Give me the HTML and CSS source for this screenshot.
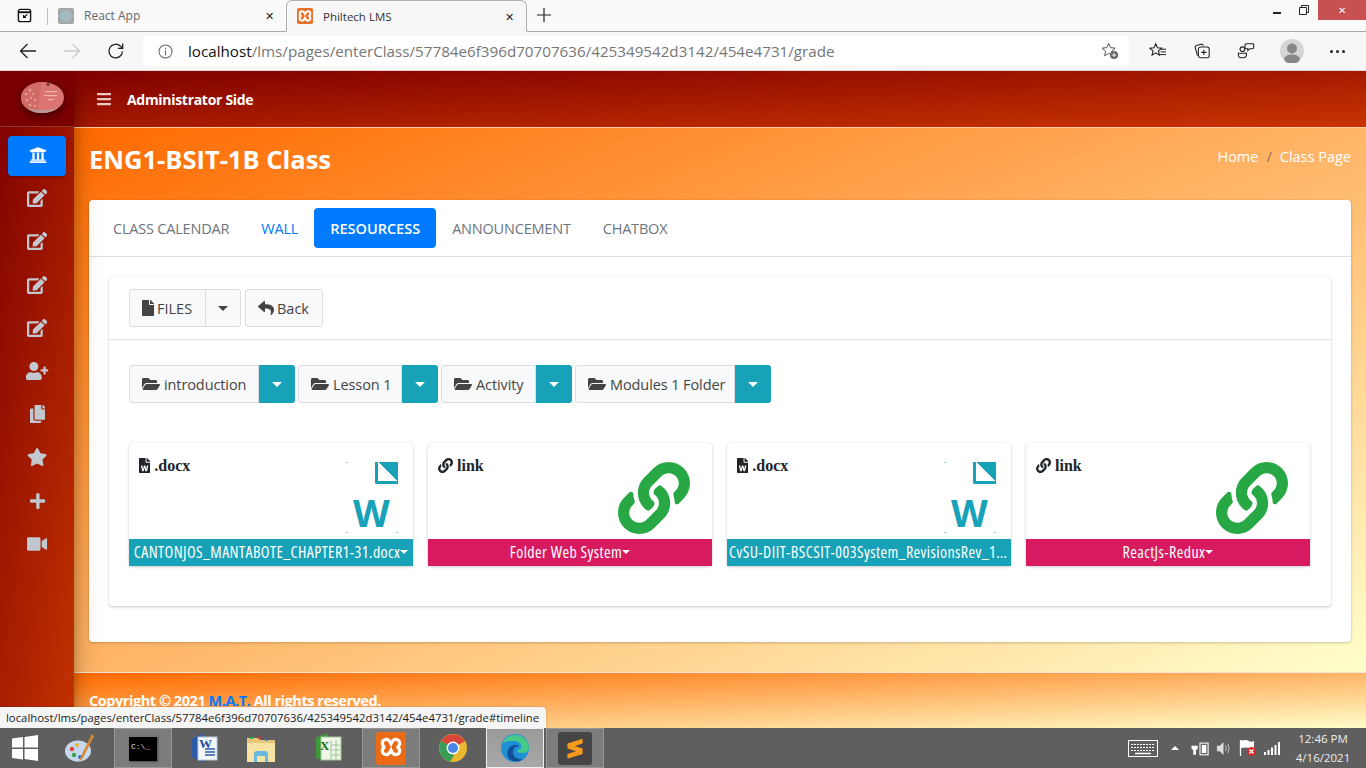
FILE: index.html
```html
<!DOCTYPE html>
<html lang="en">
<head>
  <meta charset="UTF-8">
  <title>Philtech LMS</title>
  <link rel="stylesheet" href="styles.css">
</head>
<body>

  <!-- icon sprite -->
  <svg class="sprite">
    <symbol id="i-bars" viewBox="0 0 448 512"><path d="M16 132h416c8.837 0 16-7.163 16-16V76c0-8.837-7.163-16-16-16H16C7.163 60 0 67.163 0 76v40c0 8.837 7.163 16 16 16zm0 160h416c8.837 0 16-7.163 16-16v-40c0-8.837-7.163-16-16-16H16c-8.837 0-16 7.163-16 16v40c0 8.837 7.163 16 16 16zm0 160h416c8.837 0 16-7.163 16-16v-40c0-8.837-7.163-16-16-16H16c-8.837 0-16 7.163-16 16v40c0 8.837 7.163 16 16 16z"/></symbol>
    <symbol id="i-edit" viewBox="0 0 576 512"><path d="M402.6 83.2l90.2 90.2c3.8 3.8 3.8 10 0 13.8L274.4 405.6l-92.8 10.3c-12.4 1.4-22.9-9.1-21.5-21.5l10.3-92.8L388.8 83.2c3.8-3.8 10-3.8 13.8 0zm162-22.9l-48.8-48.8c-15.2-15.2-39.9-15.2-55.2 0l-35.4 35.4c-3.8 3.8-3.8 10 0 13.8l90.2 90.2c3.8 3.8 10 3.8 13.8 0l35.4-35.4c15.2-15.3 15.2-40 0-55.2zM384 346.2V448H64V128h229.8c3.2 0 6.2-1.3 8.5-3.5l40-40c7.6-7.6 2.2-20.5-8.5-20.5H48C21.5 64 0 85.5 0 112v352c0 26.5 21.5 48 48 48h352c26.5 0 48-21.5 48-48V306.2c0-10.7-12.9-16-20.5-8.5l-40 40c-2.2 2.3-3.5 5.3-3.5 8.5z"/></symbol>
    <symbol id="i-star" viewBox="0 0 576 512"><path d="M259.3 17.8L194 150.2 47.9 171.5c-26.2 3.8-36.7 36.1-17.7 54.6l105.7 103-25 145.5c-4.5 26.3 23.2 46 46.4 33.7L288 439.6l130.7 68.7c23.2 12.2 50.9-7.4 46.4-33.7l-25-145.5 105.7-103c19-18.5 8.5-50.8-17.7-54.6L382 150.2 316.7 17.8c-11.7-23.6-45.6-23.9-57.4 0z"/></symbol>
    <symbol id="i-plus" viewBox="0 0 448 512"><path d="M416 208H272V64c0-17.67-14.33-32-32-32h-32c-17.67 0-32 14.33-32 32v144H32c-17.67 0-32 14.33-32 32v32c0 17.67 14.33 32 32 32h144v144c0 17.67 14.33 32 32 32h32c17.67 0 32-14.33 32-32V304h144c17.67 0 32-14.33 32-32v-32c0-17.67-14.33-32-32-32z"/></symbol>
    <symbol id="i-video" viewBox="0 0 576 512"><path d="M336.2 64H47.8C21.4 64 0 85.4 0 111.8v288.4C0 426.6 21.4 448 47.8 448h288.4c26.4 0 47.8-21.4 47.8-47.8V111.8c0-26.4-21.4-47.8-47.8-47.8zm189.4 37.7L416 177.3v157.4l109.6 75.5c21.2 14.6 50.4-.3 50.4-25.8V127.5c0-25.4-29.1-40.4-50.4-25.8z"/></symbol>
    <symbol id="i-user-plus" viewBox="0 0 640 512"><path d="M624 208h-64v-64c0-8.8-7.2-16-16-16h-32c-8.8 0-16 7.2-16 16v64h-64c-8.8 0-16 7.2-16 16v32c0 8.8 7.2 16 16 16h64v64c0 8.8 7.2 16 16 16h32c8.8 0 16-7.2 16-16v-64h64c8.8 0 16-7.2 16-16v-32c0-8.8-7.2-16-16-16zm-400 48c70.7 0 128-57.3 128-128S294.7 0 224 0 96 57.3 96 128s57.3 128 128 128zm89.6 32h-16.7c-22.2 10.2-46.9 16-72.9 16s-50.6-5.8-72.9-16h-16.7C60.2 288 0 348.2 0 422.4V464c0 26.5 21.5 48 48 48h352c26.5 0 48-21.5 48-48v-41.6c0-74.2-60.2-134.4-134.4-134.4z"/></symbol>
    <symbol id="i-copy" viewBox="0 0 448 512"><path d="M320 448v40c0 13.255-10.745 24-24 24H24c-13.255 0-24-10.745-24-24V120c0-13.255 10.745-24 24-24h72v296c0 30.879 25.121 56 56 56h168zm0-344V0H152c-13.255 0-24 10.745-24 24v368c0 13.255 10.745 24 24 24h272c13.255 0 24-10.745 24-24V128H344c-13.2 0-24-10.8-24-24zm120.971-31.029L375.029 7.029A24 24 0 0 0 358.059 0H352v96h96v-6.059a24 24 0 0 0-7.029-16.97z"/></symbol>
    <symbol id="i-file" viewBox="0 0 384 512"><path d="M224 136V0H24C10.7 0 0 10.7 0 24v464c0 13.3 10.7 24 24 24h336c13.3 0 24-10.7 24-24V160H248c-13.2 0-24-10.8-24-24zm160-14.1v6.1H256V0h6.1c6.4 0 12.5 2.5 17 7l97.9 98c4.5 4.5 7 10.6 7 16.9z"/></symbol>
    <symbol id="i-reply" viewBox="0 0 512 512"><path d="M8.309 189.836L184.313 37.851C199.719 24.546 224 35.347 224 56.015v80.053c160.629 1.839 288 34.032 288 186.258 0 61.441-39.581 122.309-83.333 154.132-13.653 9.931-33.111-2.533-28.077-18.631 45.344-145.012-21.507-183.51-176.59-185.742V360c0 20.7-24.3 31.453-39.687 18.164l-176.004-152c-11.071-9.562-11.086-26.753 0-36.328z"/></symbol>
    <symbol id="i-folder" viewBox="0 0 576 512"><path d="M572.694 292.093L500.27 416.248A63.997 63.997 0 0 1 444.989 448H45.025c-18.523 0-30.064-20.093-20.731-36.093l72.424-124.155A64 64 0 0 1 152 256h399.964c18.523 0 30.064 20.093 20.73 36.093zM152 224h328v-48c0-26.51-21.49-48-48-48H272l-64-64H48C21.49 64 0 85.49 0 112v278.046l69.077-118.418C86.214 242.25 117.989 224 152 224z"/></symbol>
    <symbol id="i-link" viewBox="0 0 512 512"><path d="M326.612 185.391c59.747 59.809 58.927 155.698.36 214.59-.11.12-.24.25-.36.37l-67.2 67.2c-59.27 59.27-155.699 59.262-214.96 0-59.27-59.26-59.27-155.7 0-214.96l37.106-37.106c9.84-9.84 26.786-3.3 27.294 10.606.648 17.722 3.826 35.527 9.69 52.721 1.986 5.822.567 12.262-3.783 16.612l-13.087 13.087c-28.026 28.026-28.905 73.66-1.155 101.96 28.024 28.579 74.086 28.749 102.325.51l67.2-67.19c28.191-28.191 28.073-73.757 0-101.83-3.701-3.694-7.429-6.564-10.341-8.569a16.037 16.037 0 0 1-6.947-12.606c-.396-10.567 3.348-21.456 11.698-29.806l21.054-21.055c5.521-5.521 14.182-6.199 20.584-1.731a152.482 152.482 0 0 1 20.522 17.197zM467.547 44.449c-59.261-59.262-155.69-59.27-214.96 0l-67.2 67.2c-.12.12-.25.25-.36.37-58.566 58.892-59.387 154.781.36 214.59a152.454 152.454 0 0 0 20.521 17.196c6.402 4.468 15.064 3.789 20.584-1.731l21.054-21.055c8.35-8.35 12.094-19.239 11.698-29.806a16.037 16.037 0 0 0-6.947-12.606c-2.912-2.005-6.64-4.875-10.341-8.569-28.073-28.073-28.191-73.639 0-101.83l67.2-67.19c28.239-28.239 74.3-28.069 102.325.51 27.75 28.3 26.872 73.934-1.155 101.96l-13.087 13.087c-4.35 4.35-5.769 10.79-3.783 16.612 5.864 17.194 9.042 34.999 9.69 52.721.509 13.906 17.454 20.446 27.294 10.606l37.106-37.106c59.271-59.259 59.271-155.699.001-214.959z"/></symbol>
    <symbol id="i-university" viewBox="0 0 512 512"><path d="M496 128v16a8 8 0 0 1-8 8h-24v12c0 6.627-5.373 12-12 12H60c-6.627 0-12-5.373-12-12v-12H24a8 8 0 0 1-8-8v-16a8 8 0 0 1 4.941-7.392l232-88a7.996 7.996 0 0 1 6.118 0l232 88A8 8 0 0 1 496 128zm-24 304H40c-13.255 0-24 10.745-24 24v16a8 8 0 0 0 8 8h464a8 8 0 0 0 8-8v-16c0-13.255-10.745-24-24-24zM96 192v192H60c-6.627 0-12 5.373-12 12v20h416v-20c0-6.627-5.373-12-12-12h-36V192h-64v192h-64V192h-64v192h-64V192H96z"/></symbol>
    <symbol id="i-file-word" viewBox="0 0 384 512"><path d="M224 136V0H24C10.7 0 0 10.7 0 24v464c0 13.3 10.7 24 24 24h336c13.3 0 24-10.7 24-24V160H248c-13.2 0-24-10.8-24-24zm57.1 120H305c7.7 0 13.4 7.1 11.7 14.7l-38 168c-1.2 5.5-6.1 9.3-11.7 9.3h-38c-5.5 0-10.3-3.8-11.6-9.1-25.8-103.5-20.8-81.2-25.6-110.5h-.5c-1.1 14.3-2.4 17.4-25.6 110.5-1.3 5.3-6.1 9.1-11.6 9.1H117c-5.6 0-10.5-3.9-11.7-9.4l-37.8-168c-1.7-7.5 4-14.6 11.7-14.6h24.5c5.7 0 10.7 4 11.8 9.7 15.6 78 20.1 109.5 21 122.2 1.6-10.2 7.3-32.7 29.4-122.7 1.3-5.4 6.1-9.1 11.7-9.1h29.1c5.6 0 10.4 3.8 11.7 9.2 24 100.4 28.8 124 29.6 129.4-.2-11.2-2.6-17.8 21.6-129.2 1-5.6 5.9-9.5 11.5-9.5zM384 121.9v6.1H256V0h6.1c6.4 0 12.5 2.5 17 7l97.9 98c4.5 4.5 7 10.6 7 16.9z"/></symbol>
    <symbol id="i-xampp" viewBox="0 0 24 24"><path fill="none" stroke="currentColor" stroke-width="3" d="M8 5c-3 0-4 2-4 3.500S5 12 7 12c-2 0-3 2-3 3.500S5 19 8 19c2 0 3-2 4-4 1 2 2 4 4 4 3 0 4-2 4-3.500S19 12 17 12c2 0 3-2 3-3.500S19 5 16 5c-2 0-3 2-4 4-1-2-2-4-4-4z"/></symbol>
  </svg>

  <!-- Browser tabs -->
  <div class="tabstrip">
    <svg class="tab-actions" viewBox="0 0 16 16"><rect x="1.500" y="1.500" width="13" height="13" rx="2" fill="none" stroke="#111" stroke-width="1.500"/><path d="M1.500 4.500h13" stroke="#111" stroke-width="2"/><path d="M11 7l-4 3m0-2.500V10h2.500" fill="none" stroke="#111" stroke-width="1.200"/></svg>
    <span class="tab-sep"></span>
    <div class="tab">
      <span class="favicon favicon-react">
        <svg viewBox="0 0 16 16"><g fill="none" stroke="#9fd0dc" stroke-width=".8"><ellipse cx="8" cy="8" rx="6.500" ry="2.500"/><ellipse cx="8" cy="8" rx="6.500" ry="2.500" transform="rotate(60 8 8)"/><ellipse cx="8" cy="8" rx="6.500" ry="2.500" transform="rotate(120 8 8)"/></g><circle cx="8" cy="8" r="1.200" fill="#9fd0dc"/></svg>
      </span>
      <span class="tab-title">React App</span>
      <span class="tab-close">✕</span>
    </div>
    <div class="tab tab-active">
      <span class="favicon favicon-xampp"><svg viewBox="0 0 24 24"><use href="#i-xampp"/></svg></span>
      <span class="tab-title">Philtech LMS</span>
      <span class="tab-close">✕</span>
    </div>
    <svg class="new-tab" viewBox="0 0 14 14"><path d="M7 0v14M0 7h14" stroke="#222" stroke-width="1.200"/></svg>
    <div class="win-controls">
      <span class="win-min"></span>
      <svg class="win-restore" viewBox="0 0 10 10"><path d="M.5 2.500h7v7h-7zM2.500 2.500v-2h7v7h-2" fill="none" stroke="#222"/></svg>
      <span class="win-close">✕</span>
    </div>
  </div>

  <!-- Browser toolbar -->
  <div class="toolbar">
    <svg class="tool-btn" viewBox="0 0 18 18"><path d="M17 9H1.500M8.500 2L1.500 9l7 7" fill="none" stroke="#222" stroke-width="1.300"/></svg>
    <svg class="tool-btn" viewBox="0 0 18 18"><path d="M1 9h15.500M9.500 2l7 7-7 7" fill="none" stroke="#ccc" stroke-width="1.300"/></svg>
    <svg class="tool-btn" viewBox="0 0 18 18"><path d="M15.500 9.500a6.800 6.800 0 1 1-2-5.300l2 2M15.700 1.500v4.800h-4.800" fill="none" stroke="#222" stroke-width="1.300"/></svg>
    <div class="address">
      <svg class="addr-info" viewBox="0 0 16 16"><circle cx="8" cy="8" r="7" fill="none" stroke="#666" stroke-width="1.100"/><path d="M8 7v5M8 4v1.500" stroke="#666" stroke-width="1.200"/></svg>
      <span class="addr-text"><b>localhost</b>/lms/pages/enterClass/57784e6f396d70707636/425349542d3142/454e4731/grade</span>
      <svg class="addr-star" viewBox="0 0 20 20"><path d="M8.500 1.500l2.100 4.800 5.200.5-3.900 3.400 1.100 5.100-4.500-2.600L4 15.300l1.100-5.100L1.200 6.800l5.200-.5z" fill="none" stroke="#555" stroke-width="1.100"/><circle cx="14.500" cy="14.500" r="4.500" fill="#666"/><path d="M14.500 12v5M12 14.500h5" stroke="#fff"/></svg>
    </div>
    <div class="tool-right">
      <svg viewBox="0 0 20 20"><path d="M7.500 2l1.900 4.400 4.700.4-3.600 3.100 1.100 4.700-4.100-2.500L3.400 14.600l1.100-4.700L.9 6.800l4.700-.4z" fill="none" stroke="#222" stroke-width="1.200"/><path d="M13 8h6M13 11h6M11.500 14h7.500" stroke="#222" stroke-width="1.100"/></svg>
      <svg viewBox="0 0 20 20"><path d="M5 15L2.500 6.500Q2 4.500 4 4L9 2.500Q11 2 11.500 4" fill="none" stroke="#222" stroke-width="1.200"/><rect x="6" y="5.500" width="12" height="12" rx="2.500" fill="#fff" stroke="#222" stroke-width="1.200"/><path d="M12 8.500v6M9 11.500h6" stroke="#222" stroke-width="1.200"/></svg>
      <svg viewBox="0 0 20 20"><circle cx="6" cy="8" r="2.600" fill="none" stroke="#222" stroke-width="1.200"/><path d="M1.500 12.500h9v1.500a3.500 3.500 0 0 1-3.500 3.500H5A3.500 3.500 0 0 1 1.500 14z" fill="none" stroke="#222" stroke-width="1.200"/><path d="M10 2h7.500a1 1 0 0 1 1 1v3.500a1 1 0 0 1-1 1H14l-2 2V7.500h-2a1 1 0 0 1-1-1V3a1 1 0 0 1 1-1z" fill="none" stroke="#222" stroke-width="1.200"/></svg>
      <span class="avatar"><svg viewBox="0 0 24 24"><circle cx="12" cy="12" r="12" fill="#d5d5d5"/><circle cx="12" cy="9.500" r="5" fill="#888"/><ellipse cx="12" cy="20" rx="8" ry="4.500" fill="#888"/></svg></span>
      <span class="dots"><i></i><i></i><i></i></span>
    </div>
  </div>

  <!-- App -->
  <div class="app">
    <aside class="sidebar">
      <div class="brand">
        <svg class="brand-logo" viewBox="0 0 43 31">
          <ellipse cx="21.500" cy="15.500" rx="21.500" ry="15.500" fill="#dc7472"/>
          <path d="M0 15.500A21.500 15.500 0 0 1 21 0L16 31A21.500 15.500 0 0 1 0 15.500z" fill="#cf6a66"/>
          <g fill="#e49a8c">
            <circle cx="5" cy="12" r="1.300"/><circle cx="9" cy="8" r="1.500"/><circle cx="12" cy="12" r="1.200"/><circle cx="6" cy="18" r="1.500"/><circle cx="10" cy="16" r="1.200"/><circle cx="14" cy="18" r="1.400"/><circle cx="9" cy="23" r="1.500"/><circle cx="14" cy="24" r="1.200"/>
          </g>
          <g fill="#efb4b0">
            <rect x="24" y="9" width="12" height="1.200"/><rect x="23" y="13" width="13" height="1.200"/><rect x="27" y="17" width="6" height="1.200"/>
          </g>
          <path d="M7 26Q21 31 36 26 30 31 21 31 12 31 7 26z" fill="#b39c9c"/>
          <circle cx="27" cy="2.500" r="1.600" fill="#6a3434"/>
        </svg>
      </div>
      <nav class="side-nav">
        <a class="side-item side-item-active"><svg viewBox="0 0 512 512"><use href="#i-university"/></svg></a>
        <a class="side-item"><svg viewBox="0 0 576 512"><use href="#i-edit"/></svg></a>
        <a class="side-item"><svg viewBox="0 0 576 512"><use href="#i-edit"/></svg></a>
        <a class="side-item"><svg viewBox="0 0 576 512"><use href="#i-edit"/></svg></a>
        <a class="side-item"><svg viewBox="0 0 576 512"><use href="#i-edit"/></svg></a>
        <a class="side-item"><svg viewBox="0 0 640 512"><use href="#i-user-plus"/></svg></a>
        <a class="side-item"><svg viewBox="0 0 448 512"><use href="#i-copy"/></svg></a>
        <a class="side-item"><svg viewBox="0 0 576 512"><use href="#i-star"/></svg></a>
        <a class="side-item"><svg viewBox="0 0 448 512"><use href="#i-plus"/></svg></a>
        <a class="side-item"><svg viewBox="0 0 576 512"><use href="#i-video"/></svg></a>
      </nav>
    </aside>

    <div class="main">
      <header class="topnav">
        <svg class="topnav-bars" viewBox="0 0 448 512"><use href="#i-bars"/></svg>
        <span class="topnav-title">Administrator Side</span>
      </header>

      <section class="content">
        <div class="content-head">
          <h1>ENG1-BSIT-1B Class</h1>
          <div class="breadcrumb">
            <span>Home</span><span class="crumb-sep">/</span><span>Class Page</span>
          </div>
        </div>

        <div class="card">
          <div class="card-tabs">
            <a class="pill">CLASS CALENDAR</a>
            <a class="pill pill-link">WALL</a>
            <a class="pill pill-active">RESOURCESS</a>
            <a class="pill">ANNOUNCEMENT</a>
            <a class="pill">CHATBOX</a>
          </div>

          <div class="card-body">
            <div class="inner-card">
              <div class="inner-head">
                <div class="btn-group">
                  <button class="btn btn-files"><svg class="fa" viewBox="0 0 384 512"><use href="#i-file"/></svg>FILES</button>
                  <button class="btn btn-caret"><span class="caret"></span></button>
                </div>
                <button class="btn btn-back"><svg class="fa fa-reply" viewBox="0 0 512 512"><use href="#i-reply"/></svg>Back</button>
              </div>

              <div class="inner-body">
                <div class="folders">
                  <div class="btn-group">
                    <button class="btn btn-folder folder-intro"><svg class="fa fa-folder" viewBox="0 0 576 512"><use href="#i-folder"/></svg>introduction</button>
                    <button class="btn btn-info"><span class="caret"></span></button>
                  </div>
                  <div class="btn-group">
                    <button class="btn btn-folder folder-lesson"><svg class="fa fa-folder" viewBox="0 0 576 512"><use href="#i-folder"/></svg>Lesson 1</button>
                    <button class="btn btn-info"><span class="caret"></span></button>
                  </div>
                  <div class="btn-group">
                    <button class="btn btn-folder folder-activity"><svg class="fa fa-folder" viewBox="0 0 576 512"><use href="#i-folder"/></svg>Activity</button>
                    <button class="btn btn-info"><span class="caret"></span></button>
                  </div>
                  <div class="btn-group">
                    <button class="btn btn-folder folder-modules"><svg class="fa fa-folder" viewBox="0 0 576 512"><use href="#i-folder"/></svg>Modules 1 Folder</button>
                    <button class="btn btn-info"><span class="caret"></span></button>
                  </div>
                </div>

                <div class="files">
                  <div class="file-card">
                    <div class="file-top">
                      <div class="file-type"><svg class="fa" viewBox="0 0 384 512"><use href="#i-file-word"/></svg>.docx</div>
                      <div class="word-thumb"><span class="word-corner"></span><span class="word-w">W</span></div>
                    </div>
                    <div class="file-bar bar-info"><span class="bar-name">CANTONJOS_MANTABOTE_CHAPTER1-31.docx</span><span class="bar-caret"></span></div>
                  </div>
                  <div class="file-card">
                    <div class="file-top">
                      <div class="file-type"><svg class="fa" viewBox="0 0 512 512"><use href="#i-link"/></svg>link</div>
                      <svg class="link-big" viewBox="0 0 512 512"><use href="#i-link"/></svg>
                    </div>
                    <div class="file-bar bar-pink"><span class="bar-name">Folder Web System</span><span class="bar-caret"></span></div>
                  </div>
                  <div class="file-card">
                    <div class="file-top">
                      <div class="file-type"><svg class="fa" viewBox="0 0 384 512"><use href="#i-file-word"/></svg>.docx</div>
                      <div class="word-thumb"><span class="word-corner"></span><span class="word-w">W</span></div>
                    </div>
                    <div class="file-bar bar-info"><span class="bar-name">CvSU-DIIT-BSCSIT-003System_RevisionsRev_1.docx</span></div>
                  </div>
                  <div class="file-card">
                    <div class="file-top">
                      <div class="file-type"><svg class="fa" viewBox="0 0 512 512"><use href="#i-link"/></svg>link</div>
                      <svg class="link-big" viewBox="0 0 512 512"><use href="#i-link"/></svg>
                    </div>
                    <div class="file-bar bar-pink"><span class="bar-name">ReactJs-Redux</span><span class="bar-caret"></span></div>
                  </div>
                </div>
              </div>
            </div>
          </div>
        </div>
      </section>

      <footer class="footer"><b>Copyright © 2021 <a>M.A.T.</a> All rights reserved.</b></footer>
    </div>
  </div>

  <!-- Link preview over the page -->
  <div class="status-tip">localhost/lms/pages/enterClass/57784e6f396d70707636/425349542d3142/454e4731/grade#timeline</div>

  <!-- Windows taskbar -->
  <div class="taskbar">
    <svg class="task-start" viewBox="0 0 26 26"><path fill="#fff" d="M0 3.600l11-1.500v10.400H0zM12.500 1.900L26 0v12.500H12.500zM0 14h11v10.400L0 22.900zM12.500 14H26v12l-13.500-1.900z"/></svg>
    <span class="task-slot task-paint">
      <svg viewBox="0 0 32 32"><ellipse cx="14" cy="19" rx="13" ry="10.500" fill="#c8d8ec"/><circle cx="8" cy="17" r="2.200" fill="#d94a3a"/><circle cx="10" cy="23" r="2.200" fill="#3ba04a"/><circle cx="16" cy="25" r="2" fill="#3a74c8"/><circle cx="13" cy="13" r="2" fill="#e8b830"/><path d="M28 2L17 24l-2 6 4-4L30 4z" fill="#d98a30"/></svg>
    </span>
    <span class="task-slot task-open task-cmd">
      <span class="cmd-icon"><span>C:\_</span></span>
    </span>
    <span class="task-slot task-word">
      <svg viewBox="0 0 32 32"><path d="M4 7Q9 3 15 2v28Q9 28 4 25z" fill="#2a5aa8"/><rect x="10" y="5" width="19" height="23" fill="#f4f7fb" stroke="#b8c8e0"/><path d="M17 17h10M17 20h10M17 23h10" stroke="#2a5aa8" stroke-width="1.500"/><text x="11" y="15.500" class="task-letter" fill="#1f4f9f">W</text></svg>
    </span>
    <span class="task-slot task-explorer">
      <svg viewBox="0 0 32 32"><path d="M2 6h11l2 2h15v20H2z" fill="#e8c878"/><rect x="5" y="5" width="3" height="2" fill="#38a848"/><rect x="13" y="5" width="3" height="2" fill="#d04030"/><rect x="20" y="7" width="3" height="2" fill="#3a84d0"/><rect x="2" y="11" width="28" height="19" fill="#f7e3a4"/><path d="M9 30v-8q0-3 3-3h8q3 0 3 3v8h-3v-6h-8v6z" fill="#6ab8e0"/></svg>
    </span>
    <span class="task-slot task-excel">
      <svg viewBox="0 0 32 32"><path d="M4 6Q10 2 16 2v27Q10 28 4 26z" fill="#3f9a3a"/><rect x="9" y="5" width="20" height="23" fill="#f0f6ec" stroke="#9cc690"/><path d="M19 13h9M19 18h9M19 23h9M19 8v19M24 8v19" stroke="#9cc690"/><text x="8" y="18" class="task-letter" fill="#1f6f20">X</text></svg>
    </span>
    <span class="task-slot task-open task-xampp">
      <span class="xampp-icon"><svg viewBox="0 0 24 24"><use href="#i-xampp"/></svg></span>
    </span>
    <span class="task-slot task-chrome">
      <svg viewBox="0 0 32 32"><circle cx="16" cy="16" r="14" fill="#e8b92f"/><path d="M16 16L4 9A14 14 0 0 1 28.100 9z" fill="#d9473b"/><path d="M4 9A14 14 0 0 0 13 29.700L20 18z" fill="#3a9d55"/><circle cx="16" cy="16" r="6.500" fill="#fff"/><circle cx="16" cy="16" r="5" fill="#4a86e8"/></svg>
    </span>
    <span class="task-slot task-open task-current">
      <svg viewBox="0 0 32 32"><circle cx="16" cy="16" r="14" fill="#1f8fd8"/><path d="M3 12A14 14 0 0 1 30 15Q30 21 23 21 18 21 18 18 23 18 22 13 20 9 14 9 6 9 3 12z" fill="#47c98a"/><path d="M10 27Q6 20 11 15 16 11 20 14 13 15 14 22 16 28 24 27 18 32 10 27z" fill="#114f99"/></svg>
    </span>
    <span class="task-slot task-open task-sublime">
      <span class="sublime-icon"><svg viewBox="0 0 24 24"><path d="M19 2.500L5 7v4.500l14-4.500zM5 11.500l14 4.500v-4.500L5 7zM19 12l-14 4.500V21l14-4.500z" fill="#f59a1c"/></svg></span>
    </span>

    <div class="tray">
      <svg class="tray-keyboard" viewBox="0 0 30 17"><rect x=".5" y=".5" width="29" height="16" fill="none" stroke="#fff"/><path d="M3 4.500h24M3 7.500h24M3 10.500h24" stroke="#fff" stroke-dasharray="2 1"/><path d="M7 13.500h16" stroke="#fff" stroke-width="1.500"/></svg>
      <span class="tray-up"></span>
      <svg class="tray-power" viewBox="0 0 20 16"><path d="M2 1v4M6 1v4M.5 5h7v3l-2 2v5h-3v-5l-2-2z" fill="#fff"/><rect x="10" y="2" width="9" height="13" fill="none" stroke="#fff" stroke-width="1.200"/><rect x="12" y="4" width="5" height="9" fill="#fff"/></svg>
      <svg class="tray-vol" viewBox="0 0 16 16"><path d="M1 5h3l4-4v14l-4-4H1z" fill="#ddd"/><path d="M10 5q2 3 0 6M12.500 3q3 5 0 10" fill="none" stroke="#ccc"/></svg>
      <svg class="tray-flag" viewBox="0 0 18 18"><path d="M1.500 1v16" stroke="#fff" stroke-width="1.300"/><path d="M2 1.500q6-1 8 .5t5 0v7q-3 1-5 0t-8 0z" fill="#fff"/><circle cx="12.500" cy="12.500" r="4.500" fill="#d8282a"/><path d="M10.500 10.500l4 4m0-4l-4 4" stroke="#fff" stroke-width="1.300"/></svg>
      <svg class="tray-signal" viewBox="0 0 16 13"><path d="M0 10h2v3H0zM3.500 8h2v5h-2zM7 5.500h2V13H7zM10.500 3h2v10h-2zM14 0h2v13h-2z" fill="#fff"/></svg>
      <div class="tray-clock"><span>12:46 PM</span><span>4/16/2021</span></div>
    </div>
  </div>

</body>
</html>
```

FILE: styles.css
```css
* {
  box-sizing: border-box;
}

html, body {
  margin: 0;
  padding: 0;
  height: 100%;
  overflow: hidden;
}

body {
  position: relative;
  display: flex;
  flex-direction: column;
  width: 1366px;
  height: 768px;
  font-family: "Open Sans", "Noto Sans", sans-serif;
  font-size: 14.500px;
  font-stretch: 88%;
  color: #212529;
}

.sprite {
  display: none;
}

svg {
  fill: currentColor;
  display: block;
  flex: none;
}

/* Browser tabs */
.tabstrip {
  display: flex;
  align-items: flex-end;
  height: 32px;
  flex: none;
  background: #fafafa;
  border-bottom: 1px solid #a9a9a9;
  font-size: 12px;
  font-stretch: 100%;
  color: #555;
}

.tab-actions {
  width: 15px;
  height: 15px;
  margin: 0 15px 8px 17px;
}

.tab-sep {
  width: 1px;
  height: 17px;
  background: #bbb;
  margin: 0 10px 6px 0;
}

.tab {
  display: flex;
  align-items: center;
  width: 228px;
  height: 31px;
  color: #666;
}

.tab-active {
  width: 241px;
  padding-left: 10px;
  background: #f7f7f7;
  border: 1px solid #b0b0b0;
  border-bottom: 1px solid #f7f7f7;
  border-radius: 6px 6px 0 0;
  color: #333;
  margin-bottom: -1px;
  height: 32px;
  font-size: 11.500px;
}

.favicon {
  width: 16px;
  height: 16px;
  border-radius: 2px;
  margin-right: 10px;
  flex: none;
}

.favicon-react {
  background: #a5a5a5;
}

.favicon-xampp {
  background: #e8702a;
  color: #fff;
}

.tab-title {
  flex: 1;
}

.tab-close {
  font-size: 11px;
  color: #222;
  width: 16px;
  margin-right: 9px;
  text-align: center;
}

.new-tab {
  width: 14px;
  height: 14px;
  margin: 0 0 9px 10px;
}

.win-controls {
  display: flex;
  align-items: center;
  margin-left: auto;
  align-self: flex-start;
  height: 20px;
}

.win-min {
  width: 8px;
  height: 2px;
  background: #222;
  margin-top: 5px;
  margin-right: 18px;
}

.win-restore {
  width: 10px;
  height: 10px;
  margin-right: 9px;
}

.win-close {
  width: 48px;
  height: 20px;
  background: #c75050;
  color: #fff;
  font-size: 10px;
  text-align: center;
  line-height: 20px;
}

/* Browser toolbar */
.toolbar {
  display: flex;
  align-items: center;
  height: 39px;
  flex: none;
  padding-left: 19px;
  background: #f7f7f7;
  border-bottom: 1px solid #d8d8d8;
}

.tool-btn {
  width: 18px;
  height: 18px;
  margin-right: 26px;
}

.address {
  display: flex;
  align-items: center;
  width: 986px;
  height: 30px;
  margin-left: -8px;
  padding: 0 10px 0 15px;
  background: #fff;
  border-radius: 4px;
  font-size: 15.200px;
  font-stretch: 100%;
  color: #767676;
}

.addr-info {
  width: 15px;
  height: 15px;
  margin-right: 15px;
}

.addr-text {
  flex: 1;
  white-space: nowrap;
}

.addr-text b {
  font-weight: 400;
  color: #111;
}

.addr-star {
  width: 18px;
  height: 18px;
}

.tool-right {
  display: flex;
  align-items: center;
  margin-left: 20px;
}

.tool-right svg {
  width: 18px;
  height: 18px;
  margin-right: 26px;
}

.tool-right .avatar svg {
  width: 24px;
  height: 24px;
  margin: 0;
}

.avatar {
  margin-left: -1px;
  margin-right: 26px;
}

.dots {
  display: flex;
  gap: 3px;
}

.dots i {
  width: 3px;
  height: 3px;
  border-radius: 50%;
  background: #222;
}

/* App shell */
.app {
  display: flex;
  flex: 1;
  min-height: 0;
  overflow: hidden;
}

.sidebar {
  width: 74px;
  flex: none;
  position: relative;
  z-index: 2;
  background: linear-gradient(100deg, #800000, #c23300);
  box-shadow: 0 14px 28px rgba(0, 0, 0, 0.25), 0 10px 10px rgba(0, 0, 0, 0.22);
}

.brand {
  height: 56px;
  padding: 11px 0 0 21px;
  background: #7b0000;
  border-bottom: 1px solid #8c3a30;
}

.brand-logo {
  width: 43px;
  height: 31px;
  filter: drop-shadow(0 3px 4px rgba(0, 0, 0, 0.5));
}

.side-nav {
  display: flex;
  flex-direction: column;
  gap: 3.200px;
  padding: 9px 8px 0;
}

.side-item {
  display: flex;
  justify-content: center;
  align-items: center;
  height: 40px;
  padding: 0 0 2px 1px;
  border-radius: 4px;
  color: #c2c7d0;
}

.side-item svg {
  height: 18px;
  width: auto;
}

.side-item-active {
  background: #007bff;
  color: #fff;
  box-shadow: 0 1px 3px rgba(0, 0, 0, 0.3);
}

.main {
  flex: 1;
  min-width: 0;
  display: flex;
  flex-direction: column;
}

.topnav {
  display: flex;
  align-items: center;
  flex: none;
  height: 57px;
  padding-left: 23px;
  background: linear-gradient(to bottom right, #800000, #c93400);
  border-bottom: 1px solid #ffc9a8;
  color: #fff;
}

.topnav-bars {
  width: 14px;
  height: 16px;
  margin-right: 16px;
  color: #e9c9c0;
}

.topnav-title {
  font-size: 14px;
  font-weight: 700;
  letter-spacing: -0.300px;
}

.content {
  flex: none;
  height: 544px;
  padding: 0 15px;
  background: linear-gradient(to bottom right, #ff6a00, #ffffcc);
}

.content-head {
  display: flex;
  justify-content: space-between;
  align-items: center;
  height: 72px;
  padding-bottom: 11px;
  color: #fff;
}

.content-head h1 {
  margin: 0;
  font-size: 25.500px;
  font-weight: 700;
}

.breadcrumb {
  display: flex;
  gap: 8px;
  margin-bottom: 4px;
  font-weight: 500;
}

.crumb-sep {
  color: #8a7060;
}

/* Main card */
.card {
  background: #fff;
  border-radius: 4px;
  box-shadow: 0 0 1px rgba(0, 0, 0, 0.125), 0 1px 3px rgba(0, 0, 0, 0.2);
}

.card-tabs {
  display: flex;
  height: 57px;
  padding: 8px;
  border-bottom: 1px solid #dfdfdf;
  letter-spacing: -0.200px;
  color: #6c757d;
}

.pill {
  display: flex;
  align-items: center;
  height: 40px;
  padding: 0 16px;
  border-radius: 4px;
}

.pill-link {
  color: #007bff;
}

.pill-active {
  background: #007bff;
  color: #fff;
  font-weight: 600;
  letter-spacing: 0;
}

.card-body {
  padding: 20px 20px 36px;
}

.inner-card {
  height: 329px;
  border-radius: 4px;
  box-shadow: 0 0 1px rgba(0, 0, 0, 0.125), 0 1px 3px rgba(0, 0, 0, 0.2);
}

.inner-head {
  display: flex;
  gap: 4px;
  height: 63px;
  padding: 12px 20px;
  border-bottom: 1px solid #dfdfdf;
}

.btn-group {
  display: flex;
}

.btn {
  display: flex;
  align-items: center;
  height: 38px;
  padding: 0 12px;
  background: #f8f9fa;
  border: 1px solid #ddd;
  border-radius: 3px 0 0 3px;
  font-family: inherit;
  font-size: inherit;
  font-stretch: inherit;
  white-space: nowrap;
  color: #444;
}

.btn-files {
  width: 77px;
}

.btn-caret {
  width: 35px;
  justify-content: center;
  border-left: 0;
  border-radius: 0 3px 3px 0;
}

.btn-back {
  width: 78px;
  border-radius: 3px;
}

.caret {
  width: 0;
  height: 0;
  border-left: 5px solid transparent;
  border-right: 5px solid transparent;
  border-top: 5px solid currentColor;
}

.fa {
  height: 16px;
  width: auto;
  margin-right: 3px;
}

.fa-folder {
  margin-right: 4px;
}

.inner-body {
  padding: 25px 20px 0;
}

.folders {
  display: flex;
  gap: 3px;
  margin-bottom: 40px;
}

.btn-folder {
  letter-spacing: -0.100px;
}

.folder-intro {
  width: 130px;
}

.folder-lesson {
  width: 104px;
}

.folder-activity {
  width: 95px;
}

.folder-modules {
  width: 160px;
}

.btn-info {
  width: 36px;
  height: 38px;
  justify-content: center;
  background: #17a2b8;
  border: 0;
  border-radius: 0 3px 3px 0;
  color: #fff;
}

.files {
  display: flex;
  gap: 15px;
}

.file-card {
  width: 284px;
  height: 123px;
  display: flex;
  flex-direction: column;
  border-radius: 4px;
  box-shadow: 0 0 1px rgba(0, 0, 0, 0.125), 0 1px 3px rgba(0, 0, 0, 0.2);
}

.file-top {
  flex: 1;
  display: flex;
  justify-content: space-between;
  padding: 14px 22px 0 10px;
}

.file-type {
  display: flex;
  align-items: flex-start;
  height: 18px;
  font-family: "Liberation Serif", serif;
  font-weight: 700;
  font-size: 16px;
  color: #212529;
  line-height: 18px;
}

.file-type .fa {
  height: 15px;
  margin: 1px 4px 0 0;
}

.word-thumb {
  position: relative;
  width: 52px;
  height: 71px;
  margin: 5px -7px 0 0;
  color: #17a2b8;
  /* crop marks left at the corners of the thumbnail */
  background:
    linear-gradient(#8fd0dc, #8fd0dc) 0 0 / 2px 1px no-repeat,
    linear-gradient(#8fd0dc, #8fd0dc) 0 100% / 2px 1px no-repeat,
    linear-gradient(#8fd0dc, #8fd0dc) 100% 100% / 2px 1px no-repeat;
}

.word-corner {
  position: absolute;
  top: 0;
  right: 0;
  width: 23px;
  height: 22px;
  border-left: 3px solid currentColor;
  border-bottom: 3px solid currentColor;
  border-radius: 0 0 0 2px;
  background: linear-gradient(to top right, transparent 50%, currentColor 50%);
}

.word-w {
  position: absolute;
  left: 7px;
  top: 28px;
  font-size: 38px;
  font-stretch: 100%;
  font-weight: 700;
  line-height: 44px;
}

.link-big {
  width: 72px;
  height: 72px;
  margin-top: 5px;
  color: #28a745;
}

.file-bar {
  display: flex;
  align-items: center;
  justify-content: center;
  height: 27px;
  flex: none;
  padding: 0 2px 1px;
  color: #fff;
  font-size: 16px;
  font-stretch: 75%;
  font-weight: 500;
  letter-spacing: 0.400px;
}

.bar-name {
  overflow: hidden;
  white-space: nowrap;
  text-overflow: ellipsis;
}

.bar-caret {
  flex: none;
  border-left: 4px solid transparent;
  border-right: 4px solid transparent;
  border-top: 4px solid #fff;
}

.bar-info {
  background: #17a2b8;
}

.bar-pink {
  background: #d81b60;
}

/* Footer */
.footer {
  flex: none;
  height: 57px;
  padding: 16px 15px;
  background: linear-gradient(to bottom right, #ff6a00, #ffffcc);
  border-top: 1px solid #f4e4d8;
  color: #fff;
  letter-spacing: -0.450px;
  line-height: 24px;
  white-space: nowrap;
}

.footer a {
  color: #007bff;
}

/* Link preview */
.status-tip {
  position: absolute;
  left: 0;
  bottom: 40px;
  width: 546px;
  height: 21px;
  padding: 0 6px;
  background: #f5f5f5;
  border-radius: 0 4px 0 0;
  box-shadow: 0 0 2px rgba(0, 0, 0, 0.25);
  font-size: 11.350px;
  font-stretch: 100%;
  line-height: 21px;
  color: #222;
  white-space: nowrap;
  z-index: 5;
}

/* Windows taskbar */
.taskbar {
  display: flex;
  align-items: stretch;
  flex: none;
  height: 40px;
  background: #5f5f5f;
  position: relative;
  z-index: 6;
}

.task-start {
  width: 26px;
  height: 26px;
  margin: 7px 13px 0 12px;
}

.task-slot {
  display: flex;
  justify-content: center;
  align-items: center;
  width: 58px;
  height: 40px;
  border: 1px solid transparent;
}

.task-slot > svg {
  width: 32px;
  height: 32px;
}

.task-open {
  background: #7c7c7c;
  border: 1px solid #979797;
}

.task-current {
  margin-left: 4px;
  background: linear-gradient(#9a9a9a, #a8a8a8);
  border-color: #f0f0f0;
}

.task-cmd {
  margin-left: 5px;
}

.task-word {
  margin-left: 3px;
}

.task-explorer {
  margin-left: -1px;
}

.task-excel {
  margin-left: 9px;
}

.task-xampp {
  margin-left: 5px;
}

.task-chrome {
  margin-left: 4px;
}

.task-sublime {
  margin-left: 2px;
}

.task-letter {
  font-family: "Liberation Serif", serif;
  font-weight: 700;
  font-size: 13px;
}

.cmd-icon {
  width: 28px;
  height: 26px;
  padding: 5px 2px 0;
  background: #000;
  border-top: 2px solid #777;
  color: #ddd;
  font-family: "Liberation Mono", monospace;
  font-size: 8px;
  line-height: 10px;
  box-shadow: 1px 1px 2px rgba(0, 0, 0, 0.4);
}

.xampp-icon {
  width: 30px;
  height: 33px;
  padding: 2px;
  background: #ea6a15;
  border-radius: 3px;
  color: #fff;
}

.sublime-icon {
  width: 34px;
  height: 33px;
  padding: 4px;
  background: #454545;
  border-radius: 3px;
}

.tray {
  display: flex;
  align-items: center;
  margin-left: auto;
  color: #fff;
}

.tray-keyboard {
  width: 30px;
  height: 17px;
  margin-right: 13px;
}

.tray-up {
  border-left: 4px solid transparent;
  border-right: 4px solid transparent;
  border-bottom: 4px solid #fff;
  margin-right: 12px;
}

.tray-power {
  width: 18px;
  height: 15px;
  margin-right: 7px;
}

.tray-vol {
  width: 15px;
  height: 15px;
  margin-right: 8px;
}

.tray-flag {
  width: 18px;
  height: 18px;
  margin-right: 7px;
}

.tray-signal {
  width: 16px;
  height: 13px;
  margin-right: 12px;
}

.tray-clock {
  display: flex;
  flex-direction: column;
  align-items: center;
  width: 62px;
  margin-right: 12px;
  font-size: 11.500px;
  font-stretch: 100%;
  line-height: 19px;
  color: #eee;
}
```
